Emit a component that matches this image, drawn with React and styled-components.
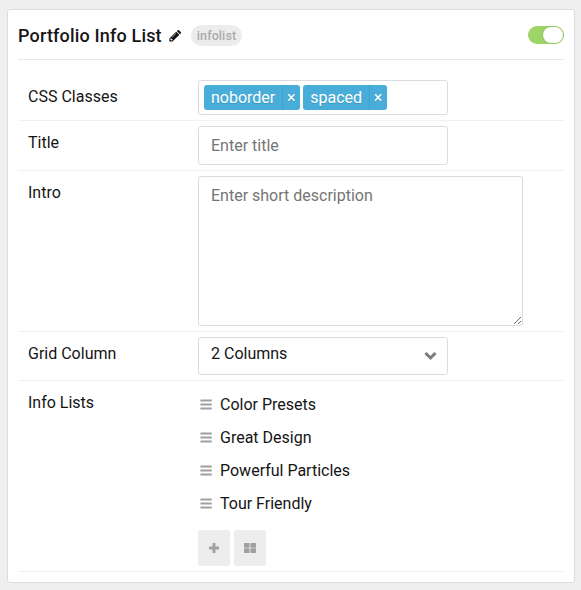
import React from 'react';
import styled, { createGlobalStyle } from 'styled-components';

const Global = createGlobalStyle`
  * { box-sizing: border-box; }
  body {
    margin: 0;
    background: #efefef;
    color: #151515;
    font: 16px/24px Roboto, sans-serif;
  }
  svg { display: block; }
`;

const Page = styled.main`
  padding: 9px 6px 7px 7px;
  height: 590px;
`;

const Card = styled.section`
  height: 574px;
  padding: 0 10px;
  background: #fff;
  border: 1px solid #dcdcdc;
  border-radius: 3px;
`;

const Header = styled.header`
  display: flex;
  align-items: center;
  height: 50px;
  border-bottom: 1px solid #e8e8e8;
`;

const Heading = styled.h1`
  margin: 2px 7px 0 0;
  font-size: 18px;
  line-height: 24px;
  font-weight: 500;
  letter-spacing: 0.17px;
  white-space: nowrap;
`;

const Badge = styled.span`
  height: 21px;
  margin: 2px 0 0 10px;
  padding: 0 6px;
  border-radius: 11px;
  background: #ececec;
  color: #aaa;
  font-size: 12.5px;
  line-height: 22px;
  font-weight: 500;
  letter-spacing: 0.1px;
`;

const PencilSlot = styled.span`
  margin-top: 2px;
`;

const Toggle = styled.button`
  display: flex;
  justify-content: flex-end;
  width: 36px;
  height: 18px;
  margin: 1px 0 0 auto;
  padding: 1px;
  border: 0;
  border-radius: 9px;
  background: #9fd468;
`;

const Knob = styled.span`
  width: 20px;
  height: 16px;
  border-radius: 8px;
  background: #fff;
  box-shadow: 0 0 2px rgba(0, 0, 0, 0.25);
`;

const Form = styled.div`
  padding-top: 15px;
`;

const Row = styled.div`
  display: grid;
  grid-template-columns: 170px 1fr;
  height: ${(p) => p.$height}px;
  padding: 5px 0 5px 10px;
  border-bottom: 1px solid #f1f1f1;
`;

const Label = styled.label`
  padding-top: 5px;
`;

const TagBox = styled.div`
  display: flex;
  gap: 3px;
  width: 250px;
  height: 35px;
  padding: 4px 5px;
  border: 1px solid #dcdcdc;
  border-radius: 3px;
`;

const Tag = styled.span`
  display: flex;
  height: 25px;
  border-radius: 3px;
  background: #48add8;
  color: #fff;
  line-height: 25px;
  text-shadow: 0 1px 0 rgba(0, 51, 83, 0.2);
`;

const TagText = styled.span`
  padding: 0 7px;
`;

const TagRemove = styled.span`
  width: 18px;
  padding-right: 1px;
  border-left: 1px solid #3fa2cc;
  text-align: center;
`;

const Input = styled.input`
  width: 250px;
  height: 39px;
  padding: 0 12px;
  border: 1px solid #dcdcdc;
  border-radius: 3px;
  font: inherit;
  &::placeholder { color: #757575; }
`;

const TextArea = styled.textarea`
  width: 325px;
  height: 150px;
  padding: 7px 12px;
  border: 1px solid #dcdcdc;
  border-radius: 3px;
  font: inherit;
  resize: both;
  &::placeholder { color: #757575; }
`;

const Select = styled.div`
  display: flex;
  align-items: center;
  justify-content: space-between;
  width: 250px;
  height: 38px;
  padding: 0 10px 0 12px;
  border: 1px solid #dcdcdc;
  border-radius: 3px;
`;

const SelectValue = styled.span`
  margin-top: -4px;
`;

const Items = styled.ul`
  margin: 2px 0 10px;
  padding: 0;
  list-style: none;
`;

const Item = styled.li`
  display: flex;
  align-items: center;
  gap: 8px;
  height: 33px;
  padding-left: 2px;
`;

const Actions = styled.div`
  display: flex;
  gap: 4px;
`;

const Action = styled.button`
  display: flex;
  align-items: center;
  justify-content: center;
  width: 32px;
  height: 36px;
  padding: 0;
  border: 0;
  border-radius: 3px;
  background: #ededed;
  color: #a0a0a0;
`;

const Pencil = () => (
  <svg width="12" height="12" viewBox="0 0 12 12">
    <path fill="#111" fillRule="evenodd" d="M.4 8.5 7.2 1.7l3.1 3.1-6.8 6.8H.4zM2.9 10.6l.8-.8-1.6-1.6-.8.8v.8h.9v.8zM2.9 7.3l.3.3 4-4-.3-.3zM7.8 1.1l.9-.9q.6-.4 1.2 0l1.9 1.9q.4.6 0 1.2l-.9.9z" />
  </svg>
);

const Bars = () => (
  <svg width="12" height="11" viewBox="0 0 12 11" fill="#a0a0a0">
    <rect x=".4" y=".6" width="11.4" height="1.8" rx=".5" />
    <rect x=".4" y="4.6" width="11.4" height="1.8" rx=".5" />
    <rect x=".4" y="8.6" width="11.4" height="1.8" rx=".5" />
  </svg>
);

const Chevron = () => (
  <svg width="13" height="10" viewBox="0 0 13 10">
    <path d="M1.5 2 6.5 7 11.5 2" fill="none" stroke="#7b7b7b" strokeWidth="3" />
  </svg>
);

const Plus = () => (
  <svg width="12" height="12" viewBox="0 0 12 12">
    <path d="M6 1v10M1 6h10" stroke="currentColor" strokeWidth="2.9" />
  </svg>
);

const Grid = () => (
  <svg width="12" height="10" viewBox="0 0 12 10" fill="currentColor">
    <rect width="5.6" height="4.7" rx=".8" />
    <rect x="6.4" width="5.6" height="4.7" rx=".8" />
    <rect y="5.3" width="5.6" height="4.7" rx=".8" />
    <rect x="6.4" y="5.3" width="5.6" height="4.7" rx=".8" />
  </svg>
);

const tags = ['noborder', 'spaced'];
const lists = ['Color Presets', 'Great Design', 'Powerful Particles', 'Tour Friendly'];

export default function App() {
  return (
    <Page>
      <Global />
      <Card>
        <Header>
          <Heading>Portfolio Info List</Heading>
          <PencilSlot><Pencil /></PencilSlot>
          <Badge>infolist</Badge>
          <Toggle aria-label="Enabled"><Knob /></Toggle>
        </Header>
        <Form>
          <Row $height={46}>
            <Label>CSS Classes</Label>
            <TagBox>
              {tags.map((tag) => (
                <Tag key={tag}>
                  <TagText>{tag}</TagText>
                  <TagRemove>×</TagRemove>
                </Tag>
              ))}
            </TagBox>
          </Row>
          <Row $height={50}>
            <Label>Title</Label>
            <Input placeholder="Enter title" />
          </Row>
          <Row $height={161}>
            <Label>Intro</Label>
            <TextArea placeholder="Enter short description" />
          </Row>
          <Row $height={49}>
            <Label>Grid Column</Label>
            <Select>
              <SelectValue>2 Columns</SelectValue>
              <Chevron />
            </Select>
          </Row>
          <Row $height={191}>
            <Label>Info Lists</Label>
            <div>
              <Items>
                {lists.map((name) => (
                  <Item key={name}><Bars />{name}</Item>
                ))}
              </Items>
              <Actions>
                <Action aria-label="Add"><Plus /></Action>
                <Action aria-label="Grid"><Grid /></Action>
              </Actions>
            </div>
          </Row>
        </Form>
      </Card>
    </Page>
  );
}
